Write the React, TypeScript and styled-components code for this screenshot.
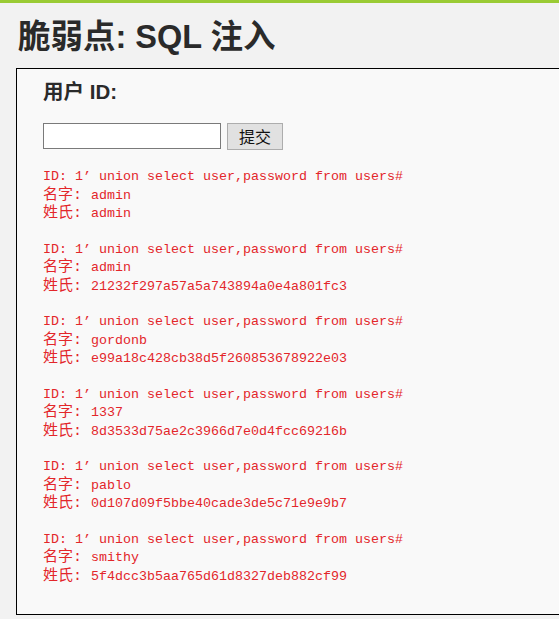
import React from "react";
import styled, { createGlobalStyle } from "styled-components";

const Global = createGlobalStyle`
  html, body { margin: 0; padding: 0; overflow: hidden; }
  body {
    background: #f2f2f2;
    font-family: "Liberation Sans", Arial, "Noto Sans CJK SC", sans-serif;
    color: #2a2a2a;
  }
`;

const TopBar = styled.div`
  height: 3px;
  background: #9acb34;
`;

const Page = styled.div`
  padding: 0 0 0 16px;
  width: 640px;
`;

const Title = styled.h1`
  margin: 0;
  padding: 14px 0 0 2px;
  height: 51px;
  box-sizing: border-box;
  font-size: 32.5px;
  line-height: 40px;
  font-weight: bold;
  color: #2a2a2a;
  font-family: "Liberation Sans", Arial, "Noto Sans CJK SC", sans-serif;
`;

const Area = styled.div`
  margin-top: 14px;
  border: 1px solid #000;
  background: #f9f9f9;
  height: 547px;
  padding: 10px 0 0 26px;
  box-sizing: border-box;
`;

const Label = styled.div`
  font-size: 20.5px;
  font-weight: bold;
  line-height: 26px;
  color: #2a2a2a;
`;

const FormRow = styled.form`
  display: flex;
  align-items: flex-start;
  gap: 6px;
  margin-top: 18px;
`;

const Input = styled.input`
  width: 178px;
  height: 26px;
  box-sizing: border-box;
  border: 1px solid #7a7a7a;
  background: #fff;
  margin: 0;
  padding: 0 2px;
`;

const Button = styled.button`
  width: 56px;
  height: 27px;
  box-sizing: border-box;
  border: 1px solid #adadad;
  background: #e1e1e1;
  font-size: 16px;
  font-family: "Noto Sans CJK SC", sans-serif;
  color: #111;
  padding: 0;
  margin: 0;
  line-height: 25px;
`;

const Results = styled.div`
  margin-top: 18px;
  display: flex;
  flex-direction: column;
  gap: 17px;
`;

const Pre = styled.pre`
  margin: 0;
  font-family: "Liberation Mono", "Noto Sans CJK SC", monospace;
  font-size: 13.33px;
  line-height: 18.5px;
  color: #e3262a;
  white-space: pre;
`;

const Key = styled.span`
  display: inline-block;
  width: 48px;
  font-size: 15px;
  line-height: 13px;
`;

const rows: [string, string][] = [
  ["admin", "admin"],
  ["admin", "21232f297a57a5a743894a0e4a801fc3"],
  ["gordonb", "e99a18c428cb38d5f260853678922e03"],
  ["1337", "8d3533d75ae2c3966d7e0d4fcc69216b"],
  ["pablo", "0d107d09f5bbe40cade3de5c71e9e9b7"],
  ["smithy", "5f4dcc3b5aa765d61d8327deb882cf99"],
];

export default function App() {
  return (
    <>
      <Global />
      <TopBar />
      <Page>
        <Title>脆弱点: SQL 注入</Title>
        <Area>
          <Label>用户 ID:</Label>
          <FormRow onSubmit={(e) => e.preventDefault()}>
            <Input type="text" />
            <Button type="submit">提交</Button>
          </FormRow>
          <Results>
            {rows.map(([first, last], i) => (
              <Pre key={i}>
                {"ID: 1’ union select user,password from users#\n"}
                <Key>名字:</Key>
                {first + "\n"}
                <Key>姓氏:</Key>
                {last}
              </Pre>
            ))}
          </Results>
        </Area>
      </Page>
    </>
  );
}
